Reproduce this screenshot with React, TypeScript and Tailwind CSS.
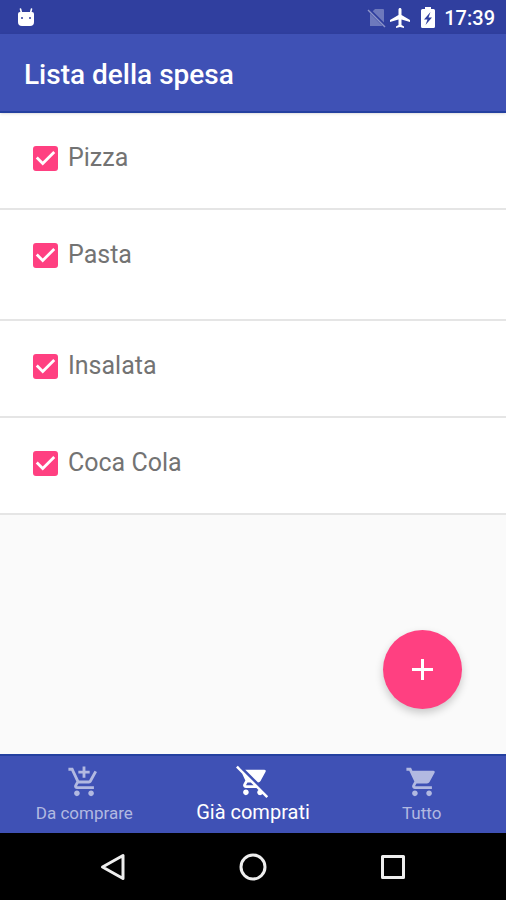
import React, { useState } from 'react';
import {
  MdAddShoppingCart,
  MdAirplanemodeActive,
  MdRemoveShoppingCart,
  MdShoppingCart,
} from 'react-icons/md';

interface Item {
  id: number;
  name: string;
  bought: boolean;
  tall?: boolean;
}

const initialItems: Item[] = [
  { id: 1, name: 'Pizza', bought: true },
  { id: 2, name: 'Pasta', bought: true, tall: true },
  { id: 3, name: 'Insalata', bought: true },
  { id: 4, name: 'Coca Cola', bought: true },
];

const tabs = [
  { id: 'todo', label: 'Da comprare', icon: MdAddShoppingCart },
  { id: 'bought', label: 'Già comprati', icon: MdRemoveShoppingCart },
  { id: 'all', label: 'Tutto', icon: MdShoppingCart },
];

const StatusBar: React.FC = () => (
  <div className="flex h-[34px] items-center bg-[#303f9f] pl-[17px] pr-[11px] pt-px text-white">
    <svg className="h-5 w-[18px]" viewBox="0 0 18 20" fill="none">
      <path d="M3.500 1l1 4M14.500 1l-1 4" stroke="currentColor" strokeWidth="1.600" strokeLinecap="round" />
      <path d="M1 6Q1 4 3 4h12q2 0 2 2v8q0 4-4 4H5q-4 0-4-4z" fill="currentColor" />
      <circle cx="5" cy="10" r="1" fill="#303f9f" />
      <circle cx="13" cy="10" r="1" fill="#303f9f" />
    </svg>
    <svg className="ml-auto h-5 w-5" viewBox="0 0 20 20" fill="none">
      <path d="M8 1h8q1 0 1 1v16H3V6z" fill="#fff" fillOpacity="0.3" />
      <path d="M1 1l18 18" stroke="#303f9f" strokeWidth="3.500" />
      <path d="M1 2l17 17" stroke="#fff" strokeOpacity="0.45" strokeWidth="1.400" />
    </svg>
    <MdAirplanemodeActive className="ml-px size-6" />
    <svg className="ml-2 h-[22px] w-4" viewBox="0 0 16 22" fill="none">
      <path d="M5 0h6v2h2.500Q15 2 15 3.500v16q0 1.500-1.500 1.500h-11Q1 21 1 19.500v-16Q1 2 2.500 2H5z" fill="currentColor" />
      <path d="M10.500 5L4 12.500h3.500L5.500 18 12 10.500H8.500z" fill="#303f9f" />
    </svg>
    <span className="ml-2 text-xl font-medium">17:39</span>
  </div>
);

interface ItemRowProps {
  item: Item;
  onToggle: (id: number) => void;
}

const ItemRow: React.FC<ItemRowProps> = ({ item, onToggle }) => (
  <li className={`border-b-2 border-[#e5e5e5] bg-white pl-[33px] pt-[27px] ${item.tall ? 'h-[111px]' : 'h-[97px]'}`}>
    <label className="inline-flex h-9 items-center gap-[10px] text-[25px] text-[#737373]">
      <span className="grid size-[25px]">
        <input
          type="checkbox"
          checked={item.bought}
          onChange={() => onToggle(item.id)}
          className="peer col-start-1 row-start-1 size-[25px] appearance-none rounded-[3px] border-2 border-[#737373] checked:border-[#ff4081] checked:bg-[#ff4081]"
        />
        <svg
          className="pointer-events-none invisible col-start-1 row-start-1 size-[25px] peer-checked:visible"
          viewBox="3 3 18 18"
          fill="#fff"
        >
          <path d="M10 17l-5-5 1.410-1.410L10 14.170l7.590-7.590L19 8z" />
        </svg>
      </span>
      {item.name}
    </label>
  </li>
);

const App: React.FC = () => {
  const [items, setItems] = useState(initialItems);
  const [activeTab, setActiveTab] = useState('bought');

  const toggleItem = (id: number) => {
    setItems(items.map((item) => (item.id === id ? { ...item, bought: !item.bought } : item)));
  };

  return (
    <div className="flex min-h-screen flex-col bg-[#fafafa] font-['Roboto',sans-serif]">
      <StatusBar />
      <header className="z-10 flex h-[79px] items-center border-b-2 border-[#2440a0] bg-[#3f51b5] px-6 pt-1 shadow">
        <h1 className="text-[28px] font-medium text-white">Lista della spesa</h1>
      </header>

      <main className="relative flex-1">
        <ul>
          {items.map((item) => (
            <ItemRow key={item.id} item={item} onToggle={toggleItem} />
          ))}
        </ul>
        <button
          aria-label="Aggiungi"
          className="absolute bottom-[45px] right-11 flex size-[79px] items-center justify-center rounded-full bg-[#ff4081] text-white shadow-[0_4px_8px_rgba(0,0,0,0.2)]"
        >
          <svg className="size-[21px]" viewBox="0 0 21 21" stroke="currentColor" strokeWidth="3">
            <path d="M10.500 0v21M0 10.500h21" />
          </svg>
        </button>
      </main>

      <nav className="grid h-[79px] grid-cols-3 border-t-2 border-[#2440a0] bg-[#3f51b5]">
        {tabs.map(({ id, label, icon: Icon }) => (
          <button
            key={id}
            onClick={() => setActiveTab(id)}
            className={`flex flex-col items-center ${
              activeTab === id ? 'pt-2 text-xl text-white' : 'pt-[9px] text-[17px] text-[#b2b9e1]'
            }`}
          >
            <Icon className="size-[34px]" />
            <span className="leading-7">{label}</span>
          </button>
        ))}
      </nav>

      <div className="flex h-[67px] items-center justify-center gap-[84px] bg-black text-[#eee]">
        <button aria-label="Indietro" className="flex w-14 justify-center">
          <svg className="size-7" viewBox="0 0 28 28" fill="none" stroke="currentColor" strokeWidth="3" strokeLinejoin="round">
            <path d="M3.500 14L24 2.500v23z" />
          </svg>
        </button>
        <button aria-label="Home" className="flex w-14 justify-center">
          <svg className="size-7" viewBox="0 0 28 28" fill="none" stroke="currentColor" strokeWidth="3">
            <circle cx="14" cy="14" r="12" />
          </svg>
        </button>
        <button aria-label="Recenti" className="flex w-14 justify-center">
          <svg className="size-7" viewBox="0 0 28 28" fill="none" stroke="currentColor" strokeWidth="3" strokeLinejoin="round">
            <rect x="3.500" y="3.500" width="21" height="21" />
          </svg>
        </button>
      </div>
    </div>
  );
};

export default App;
